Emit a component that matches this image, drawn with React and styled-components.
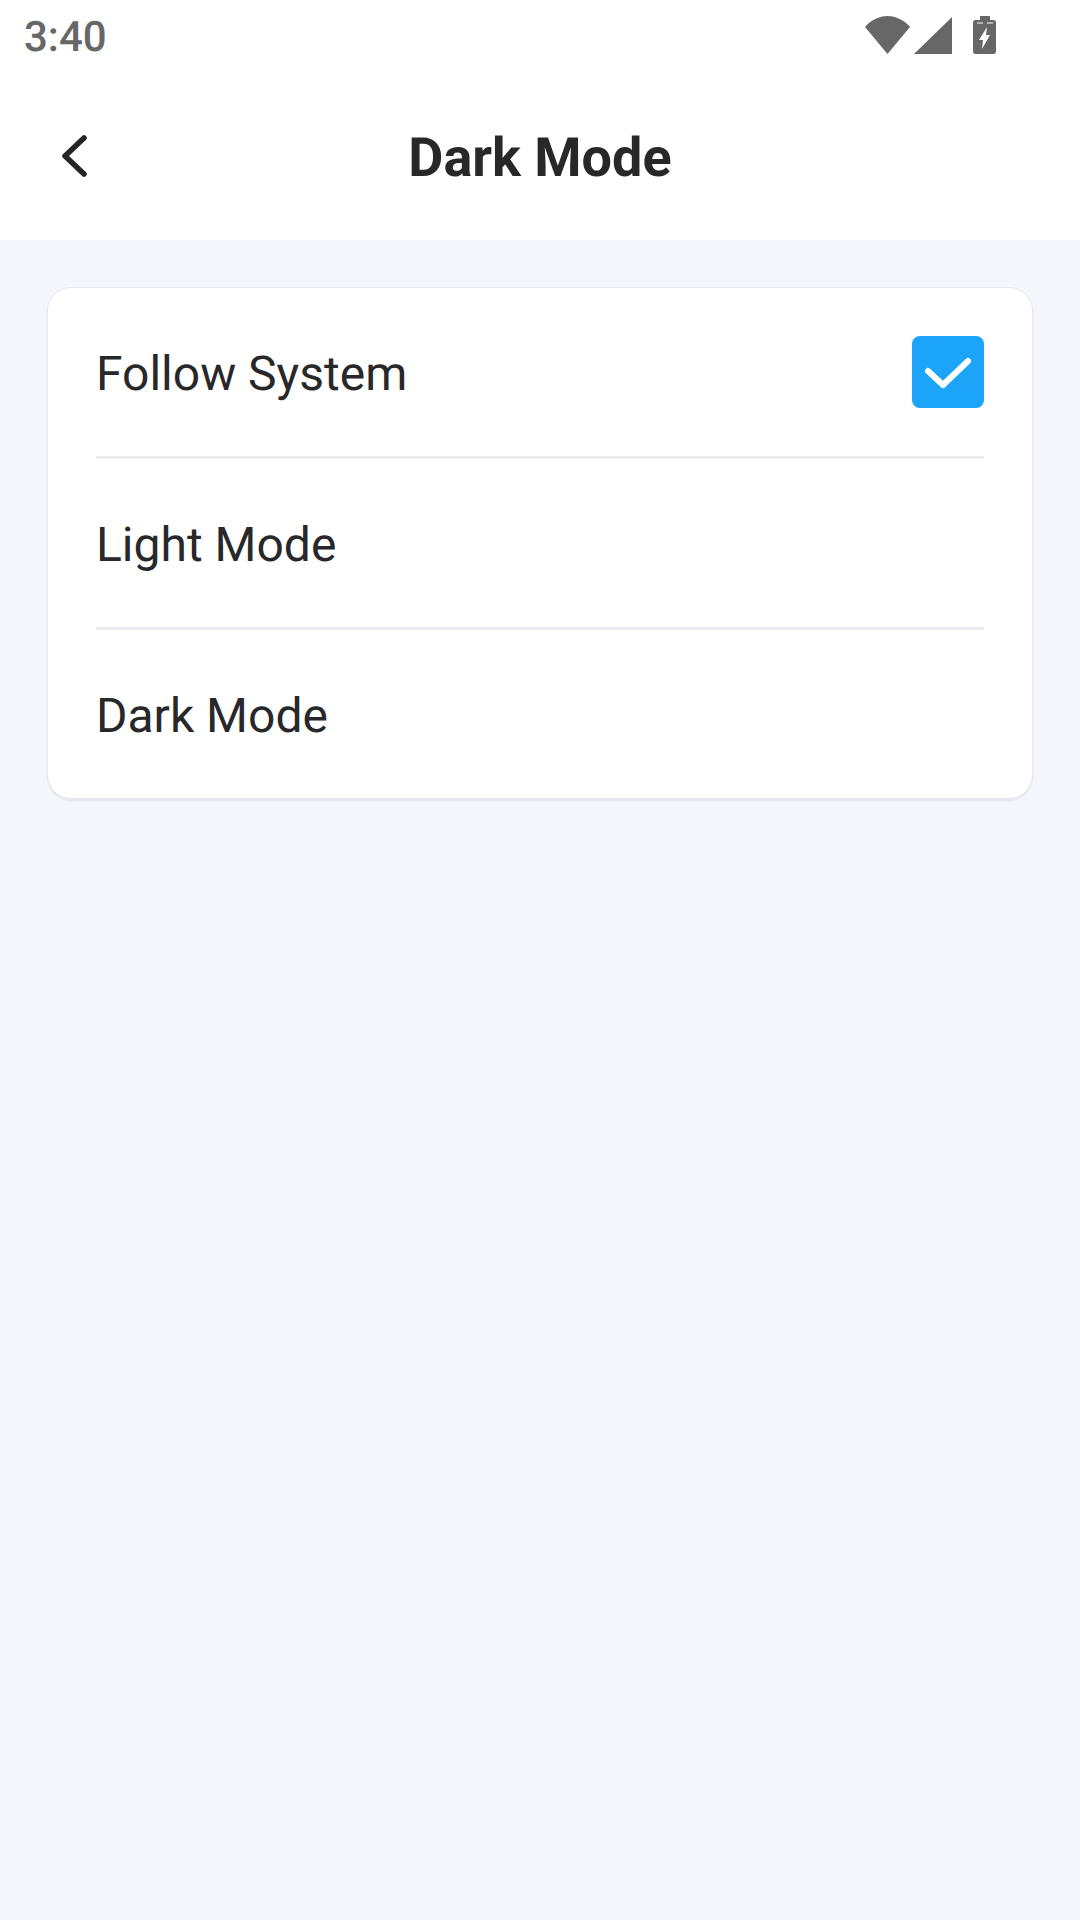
import React from "react";
import styled, { createGlobalStyle } from "styled-components";

const modes = [
  { id: "system", label: "Follow System", checked: true },
  { id: "light", label: "Light Mode" },
  { id: "dark", label: "Dark Mode" },
];

const App = () => {
  return (
    <Screen>
      <GlobalStyle />
      <TopArea>
        <StatusBar>
          <Clock>3:40</Clock>
          <StatusIcons>
            <NetworkIcons>
              <svg width="45" height="38" viewBox="0 0 45 38">
                <path d="M0 11C6 4 14 0 22.500 0S39 4 45 11L22.500 38Z" fill="#676767" />
              </svg>
              <svg width="38" height="37" viewBox="0 0 38 37">
                <path d="M38 0V37H0Z" fill="#676767" />
              </svg>
            </NetworkIcons>
            <svg width="23" height="38" viewBox="0 0 23 38">
              <path
                d="M7 0H17V4H20.500C22 4 23 5 23 6.500V35.500C23 37 22 38 20.500 38H2.500C1 38 0 37 0 35.500V6.500C0 5 1 4 2.500 4H7Z"
                fill="#676767"
              />
              <path d="M4 6.500H10V7.500H4ZM14 6.500H20V7.500H14Z" fill="#ffffff" />
              <path d="M14 11L6 24H10L9 33L17 19H13Z" fill="#ffffff" />
            </svg>
          </StatusIcons>
        </StatusBar>
        <NavBar>
          <BackButton>
            <svg width="30" height="44" viewBox="0 0 30 44">
              <path
                d="M24 4L5 22L24 40"
                fill="none"
                stroke="#262628"
                strokeWidth="5.500"
                strokeLinecap="round"
                strokeLinejoin="round"
              />
            </svg>
          </BackButton>
          <Title>Dark Mode</Title>
        </NavBar>
      </TopArea>
      <Card>
        {modes.map((m) => (
          <Row key={m.id}>
            <RowLabel>{m.label}</RowLabel>
            {m.checked && (
              <CheckBox>
                <svg width="72" height="72" viewBox="0 0 72 72">
                  <path
                    d="M16 35L31 49L56 25"
                    fill="none"
                    stroke="#ffffff"
                    strokeWidth="6"
                    strokeLinecap="round"
                    strokeLinejoin="round"
                  />
                </svg>
              </CheckBox>
            )}
          </Row>
        ))}
      </Card>
    </Screen>
  );
};

export default App;

const GlobalStyle = createGlobalStyle`
  html, body {
    margin: 0;
    padding: 0;
    background: #f6f7fc;
  }
  * {
    box-sizing: border-box;
  }
`;

const Screen = styled.div`
  display: flex;
  flex-direction: column;
  width: 1080px;
  height: 1920px;
  overflow: hidden;
  background: #f6f7fc;
  font-family: Roboto, "Liberation Sans", sans-serif;
  color: #28282a;
  text-rendering: geometricPrecision;
`;

const TopArea = styled.header`
  display: flex;
  flex-direction: column;
  height: 240px;
  background: #ffffff;
`;

const StatusBar = styled.div`
  display: flex;
  justify-content: space-between;
  align-items: center;
  height: 72px;
  padding: 0 84px 2px 24px;
`;

const Clock = styled.span`
  margin-top: 4px;
  font-size: 42px;
  font-weight: 500;
  color: #676767;
`;

const StatusIcons = styled.div`
  display: flex;
  align-items: center;
  gap: 21px;
`;

const NetworkIcons = styled.div`
  display: flex;
  align-items: center;
  gap: 4px;
`;

const NavBar = styled.nav`
  display: grid;
  grid-template-columns: 1fr auto 1fr;
  align-items: center;
  flex: 1;
`;

const BackButton = styled.div`
  display: flex;
  padding-left: 60px;
`;

const Title = styled.h1`
  margin: 0;
  padding-top: 5px;
  font-size: 54px;
  font-weight: 700;
`;

const Card = styled.section`
  margin: 47px 47px 0;
  padding: 0 48px;
  background: #ffffff;
  border-radius: 24px;
  border: 1px solid #e8e8ee;
  box-shadow: 0 2px 2px rgba(40, 40, 70, 0.08);
`;

const Row = styled.div`
  display: flex;
  align-items: center;
  justify-content: space-between;
  height: 171px;
  border-bottom: 3px solid #ebebef;

  &:last-child {
    height: 168px;
    border-bottom: none;
  }
`;

const RowLabel = styled.span`
  padding-top: 2px;
  font-size: 48px;
  font-weight: 400;
`;

const CheckBox = styled.div`
  display: flex;
  align-items: center;
  justify-content: center;
  width: 72px;
  height: 72px;
  border-radius: 8px;
  background: #1ca5f8;
`;
